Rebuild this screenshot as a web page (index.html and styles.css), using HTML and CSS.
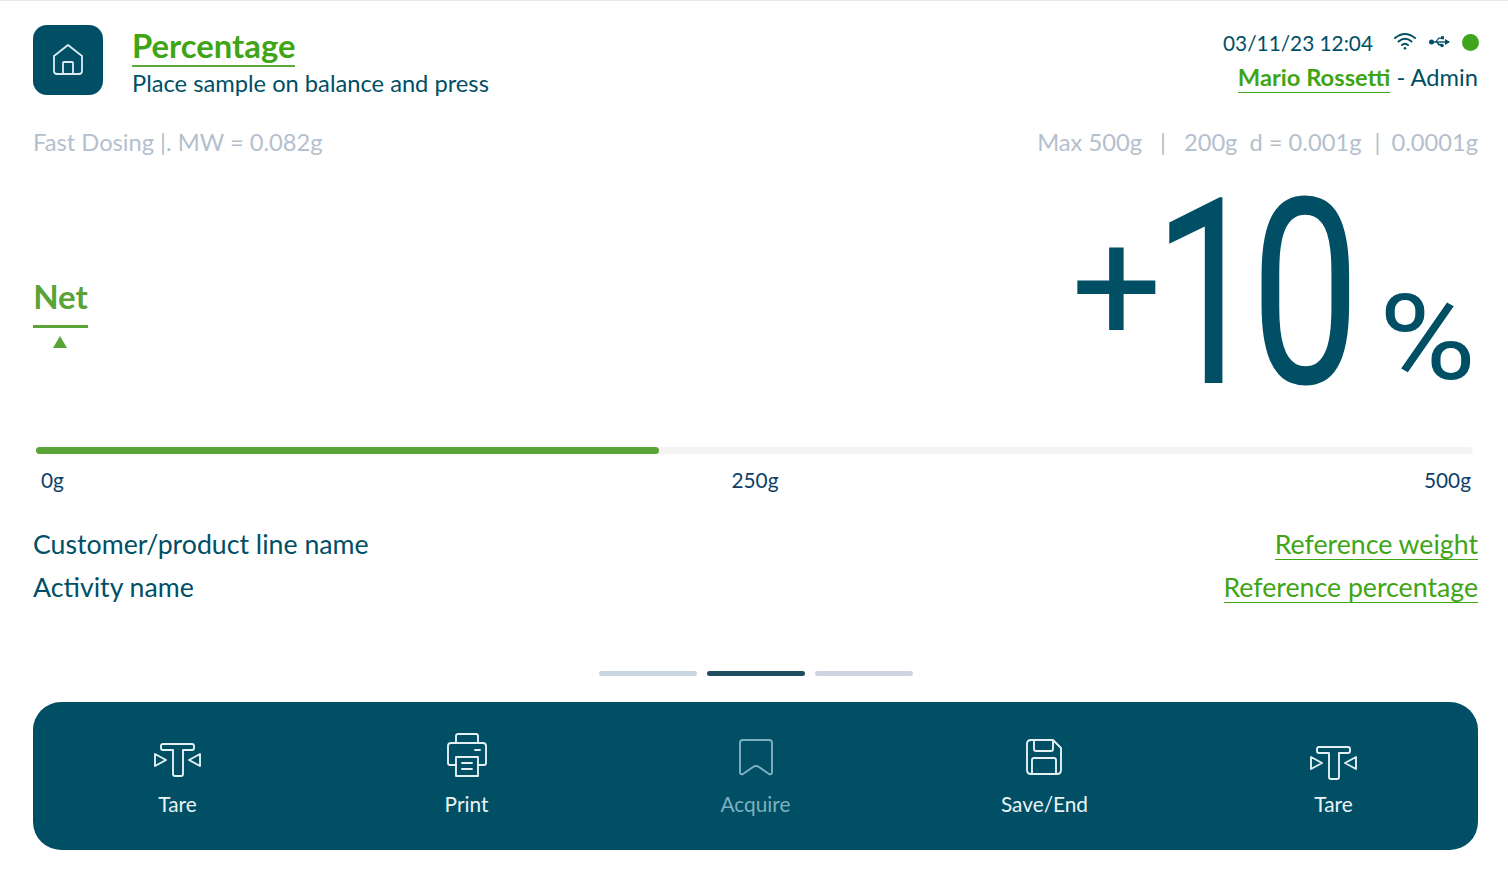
FILE: index.html
```html
<!DOCTYPE html>
<html lang="en">
<head>
<meta charset="utf-8">
<title>Percentage</title>
<link rel="stylesheet" href="styles.css">
</head>
<body>
<div class="page">
  <header class="header">
    <div class="home">
      <svg width="30" height="32" viewBox="0 0 30 32" fill="none" stroke="#dcecf2" stroke-width="1.8" stroke-linejoin="round">
        <path d="M1 12 L15 1 L29 12 V27 Q29 30 26 30 H4 Q1 30 1 27 Z"/>
        <path d="M10 30 V19 Q10 18 11 18 H19 Q20 18 20 19 V30"/>
      </svg>
    </div>
    <div class="titles">
      <h1 class="title">Percentage</h1>
      <p class="subtitle">Place sample on balance and press</p>
    </div>
    <div class="status">
      <div class="status-row">
        <span class="date">03/11/23 12:04</span>
        <svg class="wifi" width="22" height="18" viewBox="0 0 22 18" fill="none" stroke="#004f65" stroke-width="2" stroke-linecap="round">
          <path d="M1 6 Q11 -2 21 6"/>
          <path d="M4.5 9.5 Q11 4 17.5 9.5"/>
          <path d="M8 13 Q11 10.5 14 13"/>
          <circle cx="11" cy="16.2" r="1.3" fill="#004f65" stroke="none"/>
        </svg>
        <svg class="usb" width="21" height="12" viewBox="0 0 21 12" fill="#004f65">
          <circle cx="2.5" cy="6" r="2.5"/>
          <path d="M2 5.3 H20 V6.7 H2 Z"/>
          <path d="M16 3 L21 6 L16 9 Z"/>
          <path d="M6 6 L9.5 1.6 H12 V0.3 H15 V3.2 H12 V2.8 H10 L7.5 6 Z"/>
          <path d="M7 6 L9.5 9.6 H12 V7.8 H10.3 L8.8 6 Z"/>
          <circle cx="13" cy="9.5" r="1.8"/>
        </svg>
        <span class="dot"></span>
      </div>
      <div class="user"><span class="user-name">Mario Rossetti</span><span class="user-role"> - Admin</span></div>
    </div>
  </header>

  <div class="info">
    <span>Fast Dosing |. MW = 0.082g</span>
    <span class="info-right">Max 500g<i class="sep1">|</i>200g<i class="sep2">d = 0.001g</i><i class="sep3">|</i>0.0001g</span>
  </div>

  <section class="reading">
    <div class="net">
      <div class="net-label">Net</div>
      <div class="net-mark"></div>
    </div>
    <div class="value"><span class="plus">+</span><span class="digits">10</span><span class="unit">%</span></div>
  </section>

  <section class="scale">
    <div class="track"><div class="fill"></div></div>
    <div class="ticks"><span>0g</span><span class="tick-mid">250g</span><span class="tick-end">500g</span></div>
  </section>

  <section class="details">
    <div class="detail-row"><span>Customer/product line name</span><span class="link">Reference weight</span></div>
    <div class="detail-row"><span>Activity name</span><span class="link">Reference percentage</span></div>
  </section>

  <div class="pager">
    <span class="pg pg-a"></span><span class="pg pg-b"></span><span class="pg pg-c"></span>
  </div>

  <nav class="bar">
    <div class="action">
      <div class="ico">
        <svg width="48" height="34" viewBox="0 0 48 34" fill="none" stroke="#e4f0f4" stroke-width="1.9" stroke-linejoin="round">
          <path d="M9 1 H38 Q40 1 40 3 V5 Q40 7 38 7 H29 V31 Q29 33 27 33 H21 Q19 33 19 31 V7 H9 Q7 7 7 5 V3 Q7 1 9 1 Z"/>
          <path d="M1 11 V23 L12 17 Z"/>
          <path d="M46 11 V23 L35 17 Z"/>
        </svg>
      </div>
      <span>Tare</span>
    </div>
    <div class="action">
      <div class="ico">
        <svg width="40" height="44" viewBox="0 0 40 44" fill="none" stroke="#e4f0f4" stroke-width="1.9" stroke-linejoin="round" stroke-linecap="round">
          <path d="M9 10 V3 Q9 1 11 1 H29 Q31 1 31 3 V10"/>
          <path d="M9 32 H3 Q1 32 1 30 V13 Q1 10 4 10 H36 Q39 10 39 13 V30 Q39 32 37 32 H31"/>
          <path d="M9 24 H31 V43 H9 Z"/>
          <path d="M28 17 H33"/>
          <path d="M15 30 H25 M15 36 H25"/>
        </svg>
      </div>
      <span>Print</span>
    </div>
    <div class="action action-off">
      <div class="ico">
        <svg width="34" height="37" viewBox="0 0 34 37" fill="none" stroke="#7fb0c0" stroke-width="1.9" stroke-linejoin="round">
          <path d="M4 1 H30 Q33 1 33 4 V33 Q33 36 30 35 L20 28 Q17 26 14 28 L4 35 Q1 36 1 33 V4 Q1 1 4 1 Z"/>
        </svg>
      </div>
      <span>Acquire</span>
    </div>
    <div class="action">
      <div class="ico">
        <svg width="36" height="36" viewBox="0 0 36 36" fill="none" stroke="#e4f0f4" stroke-width="1.9" stroke-linejoin="round">
          <path d="M5 1 H27 L35 9 V31 Q35 35 31 35 H5 Q1 35 1 31 V5 Q1 1 5 1 Z"/>
          <path d="M8 1 V10 Q8 12 10 12 H25 Q27 12 27 10 V1"/>
          <path d="M6 35 V21 Q6 19 8 19 H28 Q30 19 30 21 V35"/>
        </svg>
      </div>
      <span>Save/End</span>
    </div>
    <div class="action">
      <div class="ico ico-low">
        <svg width="48" height="34" viewBox="0 0 48 34" fill="none" stroke="#e4f0f4" stroke-width="1.9" stroke-linejoin="round">
          <path d="M9 1 H38 Q40 1 40 3 V5 Q40 7 38 7 H29 V31 Q29 33 27 33 H21 Q19 33 19 31 V7 H9 Q7 7 7 5 V3 Q7 1 9 1 Z"/>
          <path d="M1 11 V23 L12 17 Z"/>
          <path d="M46 11 V23 L35 17 Z"/>
        </svg>
      </div>
      <span>Tare</span>
    </div>
  </nav>
</div>
</body>
</html>
```
FILE: styles.css
```css
* { box-sizing: border-box; }
html, body { margin: 0; padding: 0; height: 100%; }
body { background: #fff; color: #004f65; font-family: Lato, "Noto Sans", sans-serif; overflow: hidden; }
.page { height: 886px; padding: 0 30px 0 33px; border-top: 1px solid #e6e8ea; }

.header { display: flex; align-items: flex-start; padding-top: 24px; height: 104px; }
.home { width: 70px; height: 70px; border-radius: 14px; background: #004f65; display: flex; align-items: center; justify-content: center; flex: none; }
.titles { margin-left: 29px; margin-top: 2px; display: flex; flex-direction: column; align-items: flex-start; }
.title { margin: 0; font-size: 32.8px; line-height: 38px; font-weight: 700; color: #3fa516; border-bottom: 2px solid #5aa83a; height: 40px; }
.subtitle { margin: 0; font-size: 23.7px; line-height: 32px; }
.status { margin-left: auto; display: flex; flex-direction: column; align-items: flex-end; }
.status-row { display: flex; align-items: center; height: 34px; }
.date { font-size: 20.8px; margin-right: 21px; }
.wifi { margin-right: 13px; margin-top: -2px; }
.usb { margin-right: 12px; }
.dot { width: 17px; height: 17px; border-radius: 50%; background: #3fa51f; margin-right: -1px; }
.user { font-size: 23.7px; line-height: 30px; margin-top: 3px; }
.user-name { color: #3fa516; font-weight: 700; display: inline-block; border-bottom: 1.5px solid #3fa516; line-height: 29px; }
.user-role { white-space: pre; }

.info { display: flex; justify-content: space-between; align-items: center; height: 32px; margin-top: 21px; font-size: 23.7px; color: #b4c0ce; }
.info i { font-style: normal; }
.sep1 { margin: 0 18px; }
.sep2 { margin-left: 12px; }
.sep3 { margin: 0 11px 0 13px; }

.reading { height: 290px; display: flex; justify-content: space-between; align-items: flex-start; }
.net { margin-top: 117px; width: 55px; }
.net-label { font-size: 33px; line-height: 42px; font-weight: 700; color: #5aa336; border-bottom: 3px solid #5aa336; height: 53px; text-align: center; }
.net-mark { width: 0; height: 0; margin: 8px 0 0 20px; border-left: 7.5px solid transparent; border-right: 7.5px solid transparent; border-bottom: 12px solid #5aa336; }
.value { display: flex; align-items: baseline; font-family: Roboto, sans-serif; margin-top: 1px; }
.plus { font-size: 160px; font-weight: 400; line-height: 270px; transform: translateY(-42px); margin-right: -9px; }
.digits { font-size: 260px; line-height: 270px; width: 195px; letter-spacing: -16px; transform: scaleX(.75); transform-origin: left; }
.unit { font-size: 118px; line-height: 270px; margin-left: 31px; transform: translateY(-4px) scaleX(1.12); transform-origin: left; width: 99px; }

.scale { padding: 0 5px 0 3px; margin-top: -1px; }
.track { height: 7px; background: #f3f4f3; border-radius: 4px; }
.fill { width: 43.35%; height: 7px; background: #5aa336; border-radius: 4px; }
.ticks { display: grid; grid-template-columns: 1fr auto 1fr; font-size: 20.8px; line-height: 26px; margin-top: 13px; padding: 0 2px 0 5px; color: #0e3f6a; }
.tick-mid { margin-left: -2px; }
.tick-end { text-align: right; }

.details { margin-top: 34px; }
.detail-row { display: flex; justify-content: space-between; align-items: flex-start; font-size: 26.7px; height: 43px; line-height: 34px; }
.link { color: #3fa516; border-bottom: 1.5px solid #3fa516; height: 33px; }

.pager { display: flex; justify-content: center; gap: 10px; margin-top: 58px; }
.pg { width: 98px; height: 5px; border-radius: 3px; }
.pg-a { background: #c9d6e0; }
.pg-b { background: #1f4d5f; }
.pg-c { background: #d0d3e0; }

.bar { margin-top: 26px; height: 148px; border-radius: 28px; background: #004f65; display: grid; grid-template-columns: repeat(5, 1fr); color: #eaf3f6; }
.action { display: flex; flex-direction: column; align-items: center; font-size: 20.8px; }
.ico { height: 44px; margin-top: 31px; display: flex; align-items: flex-start; justify-content: center; margin-bottom: 14px; }
.action:nth-child(1) .ico svg { margin-top: 10px; }
.action:nth-child(3) .ico svg { margin-top: 6px; }
.action:nth-child(4) .ico svg { margin-top: 6px; margin-right: 2px; }
.ico-low svg { margin-top: 13px; }
.action-off { color: #7fb0c0; }
```
